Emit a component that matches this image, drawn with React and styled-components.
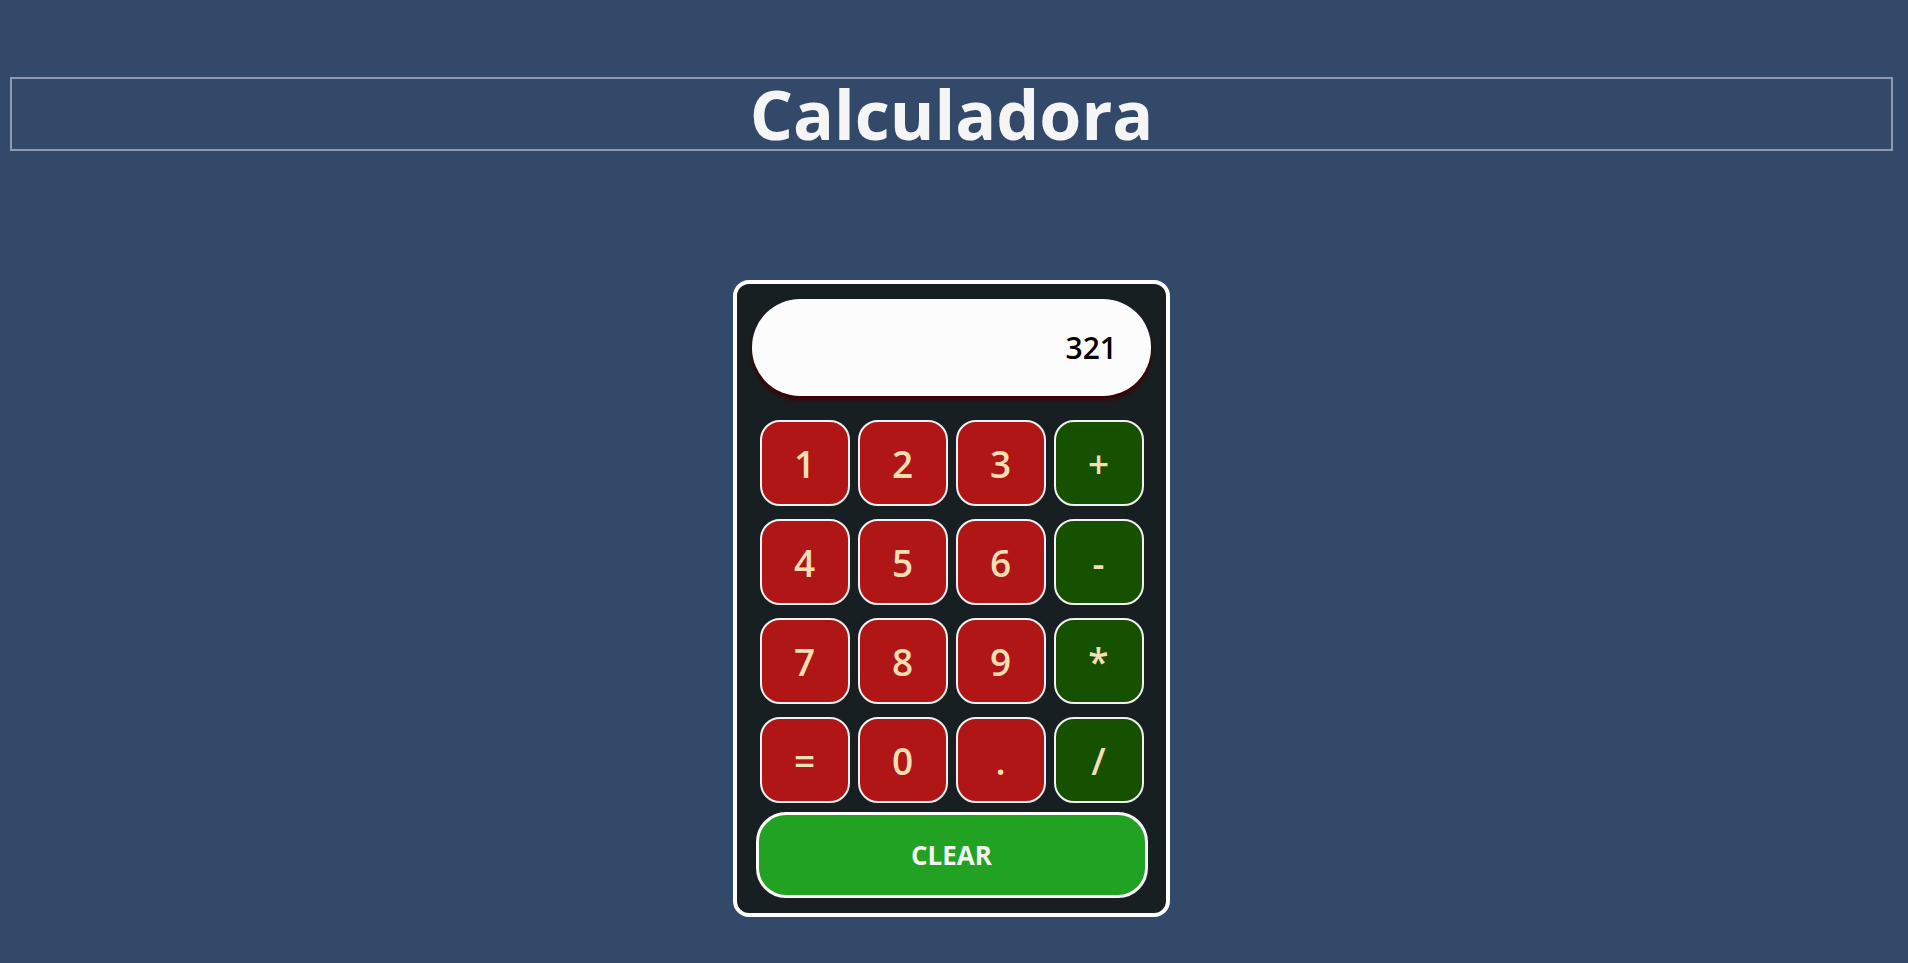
import React, { useState } from "react";
import styled, { createGlobalStyle } from "styled-components";

const GlobalStyle = createGlobalStyle`
  html, body {
    margin: 0;
    padding: 0;
    background: #334969;
  }
  body {
    font-family: "Open Sans", "Noto Sans", sans-serif;
  }
`;

const Page = styled.div`
  padding: 77px 15px 54px 10px;
  display: flex;
  flex-direction: column;
  align-items: stretch;
`;

const Title = styled.h1`
  margin: 0;
  border: 2px solid #8e9aae;
  color: #f5f5f5;
  font-family: "Open Sans", "Noto Sans", sans-serif;
  font-weight: 700;
  font-size: 68px;
  line-height: 70px;
  text-align: center;
`;

const Calculator = styled.div`
  align-self: center;
  margin-top: 129px;
  width: 437px;
  box-sizing: border-box;
  padding: 15px;
  border: 4px solid #ffffff;
  border-radius: 16px;
  background: #181f22;
`;

const Display = styled.div`
  height: 97px;
  box-sizing: border-box;
  border-radius: 48px;
  background: #fcfcfc;
  box-shadow: 0 4px 4px #3e0000;
  display: flex;
  align-items: center;
  justify-content: flex-end;
  padding-right: 34px;
  font-size: 30px;
  font-weight: 600;
  color: #000;
  margin-bottom: 24px;
`;

const Keys = styled.div`
  display: grid;
  grid-template-columns: repeat(4, 90px);
  grid-auto-rows: 86px;
  column-gap: 8px;
  row-gap: 13px;
  justify-content: center;
`;

const Key = styled.button`
  box-sizing: border-box;
  margin: 0;
  padding: 0;
  border: 2px solid #f2f2f2;
  border-radius: 20px;
  background: ${(p) => (p.$op ? "#165100" : "#b01616")};
  color: #f5deb3;
  font-family: "Open Sans", "Noto Sans", sans-serif;
  font-weight: 600;
  font-size: 37px;
  line-height: 1;
  display: flex;
  align-items: center;
  justify-content: center;
  cursor: pointer;
`;

const Clear = styled.button`
  display: block;
  box-sizing: border-box;
  width: 392px;
  height: 86px;
  margin: 9px auto 0;
  padding: 0;
  border: 3px solid #ffffff;
  border-radius: 30px;
  background: #21a222;
  color: #f4f4f4;
  font-family: "Open Sans", "Noto Sans", sans-serif;
  font-weight: 700;
  font-size: 26px;
  cursor: pointer;
`;

const keys = [
  ["1", false], ["2", false], ["3", false], ["+", true],
  ["4", false], ["5", false], ["6", false], ["-", true],
  ["7", false], ["8", false], ["9", false], ["*", true],
  ["=", false], ["0", false], [".", false], ["/", true],
];

export default function App() {
  const [value, setValue] = useState("321");

  const press = (k) => {
    if (k === "=") {
      try {
        // eslint-disable-next-line no-new-func
        const r = Function(`"use strict"; return (${value || 0})`)();
        setValue(String(r));
      } catch (e) {
        setValue("Error");
      }
      return;
    }
    setValue((v) => (v === "Error" ? k : v + k));
  };

  return (
    <>
      <GlobalStyle />
      <Page>
        <Title>Calculadora</Title>
        <Calculator>
          <Display>{value}</Display>
          <Keys>
            {keys.map(([k, op]) => (
              <Key key={k} $op={op} onClick={() => press(k)}>
                {k}
              </Key>
            ))}
          </Keys>
          <Clear onClick={() => setValue("")}>CLEAR</Clear>
        </Calculator>
      </Page>
    </>
  );
}
